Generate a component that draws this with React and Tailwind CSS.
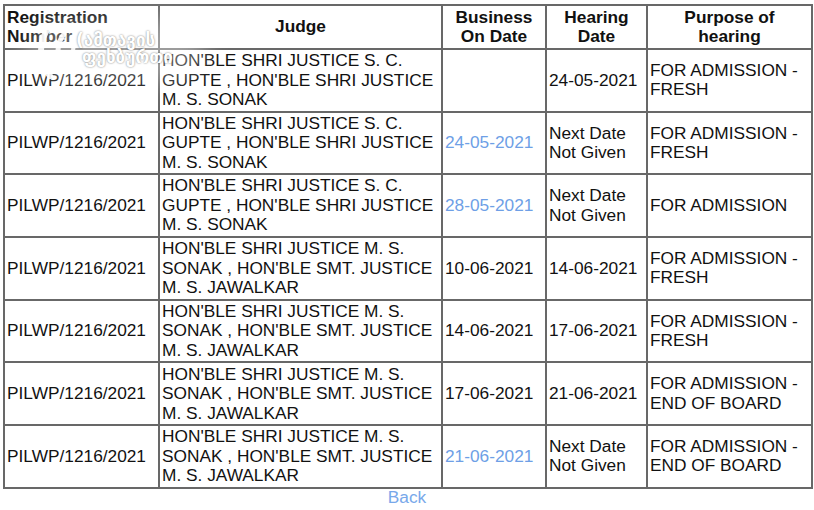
const judges1 = ["HON'BLE SHRI JUSTICE S. C.", "GUPTE , HON'BLE SHRI JUSTICE", "M. S. SONAK"];
const judges2 = ["HON'BLE SHRI JUSTICE M. S.", "SONAK , HON'BLE SMT. JUSTICE", "M. S. JAWALKAR"];

const rows = [
  { judge: judges1, business: "", businessLink: false, hearing: ["24-05-2021"], purpose: ["FOR ADMISSION -", "FRESH"] },
  { judge: judges1, business: "24-05-2021", businessLink: true, hearing: ["Next Date", "Not Given"], purpose: ["FOR ADMISSION -", "FRESH"] },
  { judge: judges1, business: "28-05-2021", businessLink: true, hearing: ["Next Date", "Not Given"], purpose: ["FOR ADMISSION"] },
  { judge: judges2, business: "10-06-2021", businessLink: false, hearing: ["14-06-2021"], purpose: ["FOR ADMISSION -", "FRESH"] },
  { judge: judges2, business: "14-06-2021", businessLink: false, hearing: ["17-06-2021"], purpose: ["FOR ADMISSION -", "FRESH"] },
  { judge: judges2, business: "17-06-2021", businessLink: false, hearing: ["21-06-2021"], purpose: ["FOR ADMISSION -", "END OF BOARD"] },
  { judge: judges2, business: "21-06-2021", businessLink: true, hearing: ["Next Date", "Not Given"], purpose: ["FOR ADMISSION -", "END OF BOARD"] },
];

function Lines({ lines }) {
  return lines.map((l, i) => (
    <span key={i} className="block whitespace-nowrap">{l}</span>
  ));
}

// semi-transparent logo stamped over the top-left corner
function Watermark() {
  return (
    <div className="pointer-events-none absolute left-[26px] top-[18px] w-[180px] h-[64px]">
      <div className="absolute inset-0 rounded-full bg-white/35 blur-md" />
      <svg className="absolute left-[8px] top-[4px]" width="48" height="58" viewBox="0 0 48 58" fill="none">
        <path d="M16 4 C4 18 4 40 16 54" stroke="white" strokeWidth="6" strokeLinecap="round" opacity="0.9" />
        <path d="M30 12 C22 22 22 36 30 46" stroke="white" strokeWidth="5" strokeLinecap="round" opacity="0.9" />
        <path d="M42 19 C38 25 38 33 42 39" stroke="white" strokeWidth="4" strokeLinecap="round" opacity="0.9" />
      </svg>
      <div
        className="absolute left-[50px] top-[14px] text-white text-[17px] leading-[17px] font-bold"
        style={{ fontFamily: '"DejaVu Sans", sans-serif', textShadow: "0 0 2px rgba(0,0,0,0.55)" }}
      >
        <div>(ამთავის</div>
        <div className="pl-[6px]">ფეხბურთი</div>
      </div>
    </div>
  );
}

export default function App() {
  const cell = "border-2 border-[#686868] px-[2px] py-[1px] align-middle";
  return (
    <div
      className="relative bg-white w-[814px] h-[510px] pl-[3px] pt-[4px] text-[17.3px] leading-[19.5px] text-[#111]"
      style={{ fontFamily: '"Liberation Sans", Arial, sans-serif' }}
    >
      <table className="border-collapse border-2 border-[#5a5a5a] w-[808px] table-fixed">
        <colgroup>
          <col className="w-[155px]" />
          <col className="w-[283px]" />
          <col className="w-[104px]" />
          <col className="w-[101px]" />
          <col className="w-[165px]" />
        </colgroup>
        <thead>
          <tr className="h-[44px]">
            <th className={cell + " text-left font-bold"}>
              <Lines lines={["Registration", "Number"]} />
            </th>
            <th className={cell + " text-center font-bold"}>Judge</th>
            <th className={cell + " text-center font-bold"}>
              <Lines lines={["Business", "On Date"]} />
            </th>
            <th className={cell + " text-center font-bold"}>
              <Lines lines={["Hearing", "Date"]} />
            </th>
            <th className={cell + " text-center font-bold"}>
              <Lines lines={["Purpose of", "hearing"]} />
            </th>
          </tr>
        </thead>
        <tbody>
          {rows.map((r, i) => (
            <tr key={i} className="h-[62.7px]">
              <td className={cell}>PILWP/1216/2021</td>
              <td className={cell}>
                <Lines lines={r.judge} />
              </td>
              <td className={cell + (r.businessLink ? " text-[#6e9fe6]" : "")}>{r.business}</td>
              <td className={cell}>
                <Lines lines={r.hearing} />
              </td>
              <td className={cell}>
                <Lines lines={r.purpose} />
              </td>
            </tr>
          ))}
        </tbody>
      </table>
      <div className="w-[808px] text-center -mt-[1px]">
        <a href="#" className="text-[#78a8ea]">Back</a>
      </div>
      <Watermark />
    </div>
  );
}
